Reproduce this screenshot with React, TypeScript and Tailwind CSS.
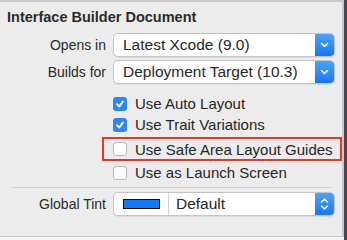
import type { ReactNode } from 'react'

const FONT = "font-['Liberation_Sans','Helvetica',Arial,sans-serif]"

function Chevron({ updown = false }: { updown?: boolean }) {
  if (updown) {
    return (
      <svg width="9" height="14" viewBox="0 0 9 14" fill="none" stroke="white" strokeWidth="1.6" strokeLinecap="round" strokeLinejoin="round">
        <path d="M1.5 5 L4.5 2 L7.5 5" />
        <path d="M1.5 9 L4.5 12 L7.5 9" />
      </svg>
    )
  }
  return (
    <svg width="9" height="6" viewBox="0 0 9 6" fill="none" stroke="white" strokeWidth="1.6" strokeLinecap="round" strokeLinejoin="round">
      <path d="M1.5 1.5 L4.5 4.5 L7.5 1.5" />
    </svg>
  )
}

function Popup({ children, updown = false }: { children: ReactNode; updown?: boolean }) {
  return (
    <div className="flex h-[24px] w-[222px] items-stretch overflow-hidden rounded-[5px] border border-[#c4c4c4] bg-white shadow-[0_1px_0_rgba(0,0,0,0.06)]">
      <div className="flex min-w-0 flex-1 items-center">{children}</div>
      <div className="flex w-[19px] flex-none items-center justify-center bg-gradient-to-b from-[#4aa3ff] to-[#1477f5]">
        <Chevron updown={updown} />
      </div>
    </div>
  )
}

function Label({ children }: { children: ReactNode }) {
  return <div className="w-[106px] flex-none text-right text-[14px] text-[#2a2a2a]">{children}</div>
}

function Check({ checked, label }: { checked: boolean; label: string }) {
  return (
    <div className="flex h-[17px] items-center gap-[8px]">
      {checked ? (
        <span className="flex h-[14px] w-[14px] flex-none items-center justify-center rounded-[3px] bg-[#2a86fb]">
          <svg width="10" height="10" viewBox="0 0 10 10" fill="none" stroke="white" strokeWidth="1.8" strokeLinecap="round" strokeLinejoin="round">
            <path d="M2 5.2 L4.2 7.6 L8 2.4" />
          </svg>
        </span>
      ) : (
        <span className="h-[14px] w-[14px] flex-none rounded-[3px] border border-[#b9b9b9] bg-white" />
      )}
      <span className="text-[15px] leading-[17px] text-[#262626]">{label}</span>
    </div>
  )
}

export default function App() {
  return (
    <div className={`flex h-[240px] w-[347px] bg-[#f4f4f4] ${FONT}`}>
      <div className="flex h-[237px] w-[344px] flex-none flex-col border-t-2 border-r-2 border-b border-[#c9c9c9] bg-[#ececec]">
        <div className="pl-[7px] pt-[7px] text-[14.5px] font-bold leading-[17px] text-[#2b2b2b]">Interface Builder Document</div>

        <div className="mt-[7px] flex flex-col gap-[3px]">
          <div className="flex items-center gap-[7px]">
            <Label>Opens in</Label>
            <Popup>
              <span className="pl-[9px] text-[15.5px] text-[#262626]">Latest Xcode (9.0)</span>
            </Popup>
          </div>
          <div className="flex items-center gap-[7px]">
            <Label>Builds for</Label>
            <Popup>
              <span className="pl-[9px] text-[15.5px] text-[#262626]">Deployment Target (10.3)</span>
            </Popup>
          </div>
        </div>

        <div className="mt-[11px] flex flex-col pl-[113px]">
          <Check checked label="Use Auto Layout" />
          <div className="mt-[4px]">
            <Check checked label="Use Trait Variations" />
          </div>
          <div className="-ml-[11px] mt-[4px] w-[240px] border-2 border-[#f5311f] py-[1.5px] pl-[9px]">
            <Check checked={false} label="Use Safe Area Layout Guides" />
          </div>
          <div className="mt-[3px]">
            <Check checked={false} label="Use as Launch Screen" />
          </div>
        </div>

        <div className="mx-[11px] mt-[6px] h-px bg-[#d2d2d2]" />

        <div className="mt-[4px] flex items-center gap-[7px]">
          <Label>Global Tint</Label>
          <Popup updown>
            <div className="flex h-full w-[55px] flex-none items-center justify-center border-r border-[#d0d0d0]">
              <span className="h-[10px] w-[37px] border border-black bg-[#0a7aff]" />
            </div>
            <span className="pl-[7px] text-[15.5px] text-[#262626]">Default</span>
          </Popup>
        </div>
      </div>
      <div className="h-full flex-1 bg-[#4a4458]" />
    </div>
  )
}
